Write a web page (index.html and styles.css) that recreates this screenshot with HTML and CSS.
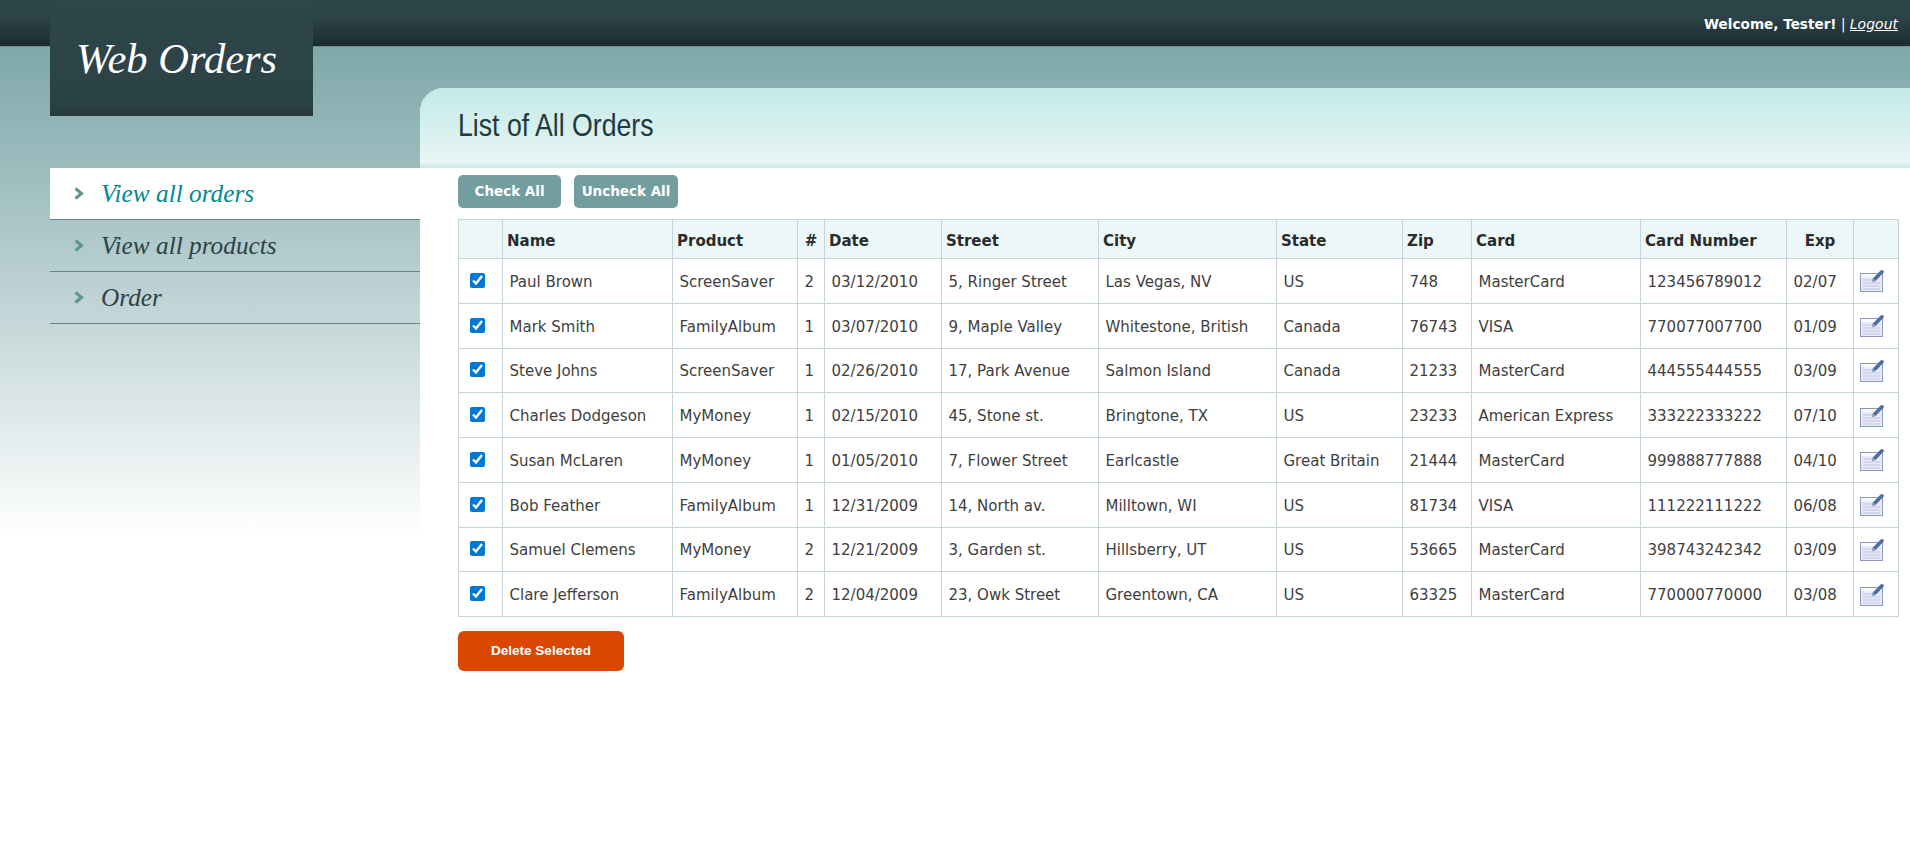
FILE: index.html
```html
<!DOCTYPE html>
<html lang="en">
<head>
    <meta charset="UTF-8">
    <title>Web Orders</title>
    <link rel="stylesheet" href="styles.css">
</head>
<body>
    <svg class="sprites" width="0" height="0">
        <symbol id="edit" viewBox="0 0 24 23">
            <rect x="0.5" y="4.5" width="22" height="18" fill="#e8ebf6" stroke="#8f98bf"/>
            <rect x="1" y="5" width="21" height="3" fill="#fafbfe"/>
            <path d="M3 11h12M3 14h17M3 17h17M3 20h17" stroke="#bcc4df" fill="none"/>
            <path d="M12 13l0.8-3.6L20.6 1.4c0.8-0.7 2-0.7 2.7 0c0.7 0.7 0.7 1.8 0 2.6L15.6 12z" fill="#4f6ca3"/>
            <path d="M12 13l0.8-3.6 2.8 2.6z" fill="#9aa6c9"/>
        </symbol>
        <symbol id="chevron" viewBox="0 0 10 13">
            <path d="M1.5 1.5L7.5 6.500L1.500 11.5" fill="none" stroke="#5f9293" stroke-width="3"/>
        </symbol>
    </svg>

    <div class="topbar">
        <div class="login-info"><b>Welcome, Tester!</b> | <a href="#">Logout</a></div>
    </div>

    <div class="layout">
        <div class="sidebar">
            <div class="logo">Web Orders</div>
            <ul class="menu">
                <li class="selected"><svg class="chevron"><use href="#chevron"/></svg><a href="#">View all orders</a></li>
                <li><svg class="chevron"><use href="#chevron"/></svg><a href="#">View all products</a></li>
                <li><svg class="chevron"><use href="#chevron"/></svg><a href="#">Order</a></li>
            </ul>
        </div>

        <div class="main">
            <h2 class="page-title"><span>List of All Orders</span></h2>
            <div class="content">
                <div class="list-actions">
                    <a href="#" class="btn btn-check">Check All</a>
                    <a href="#" class="btn btn-uncheck">Uncheck All</a>
                </div>

                <table class="orders">
                    <colgroup>
                        <col class="c-check"><col class="c-name"><col class="c-product"><col class="c-qty">
                        <col class="c-date"><col class="c-street"><col class="c-city"><col class="c-state">
                        <col class="c-zip"><col class="c-card"><col class="c-number"><col class="c-exp">
                        <col class="c-edit">
                    </colgroup>
                    <thead>
                        <tr>
                            <th></th>
                            <th>Name</th>
                            <th>Product</th>
                            <th class="center">#</th>
                            <th>Date</th>
                            <th>Street</th>
                            <th>City</th>
                            <th>State</th>
                            <th>Zip</th>
                            <th>Card</th>
                            <th>Card Number</th>
                            <th class="center">Exp</th>
                            <th></th>
                        </tr>
                    </thead>
                    <tbody>
                        <tr>
                            <td class="check"><input type="checkbox" checked></td>
                            <td>Paul Brown</td><td>ScreenSaver</td><td>2</td><td>03/12/2010</td>
                            <td>5, Ringer Street</td><td>Las Vegas, NV</td><td>US</td><td>748</td>
                            <td>MasterCard</td><td>123456789012</td><td>02/07</td>
                            <td class="edit"><svg class="edit-icon"><use href="#edit"/></svg></td>
                        </tr>
                        <tr>
                            <td class="check"><input type="checkbox" checked></td>
                            <td>Mark Smith</td><td>FamilyAlbum</td><td>1</td><td>03/07/2010</td>
                            <td>9, Maple Valley</td><td>Whitestone, British</td><td>Canada</td><td>76743</td>
                            <td>VISA</td><td>770077007700</td><td>01/09</td>
                            <td class="edit"><svg class="edit-icon"><use href="#edit"/></svg></td>
                        </tr>
                        <tr>
                            <td class="check"><input type="checkbox" checked></td>
                            <td>Steve Johns</td><td>ScreenSaver</td><td>1</td><td>02/26/2010</td>
                            <td>17, Park Avenue</td><td>Salmon Island</td><td>Canada</td><td>21233</td>
                            <td>MasterCard</td><td>444555444555</td><td>03/09</td>
                            <td class="edit"><svg class="edit-icon"><use href="#edit"/></svg></td>
                        </tr>
                        <tr>
                            <td class="check"><input type="checkbox" checked></td>
                            <td>Charles Dodgeson</td><td>MyMoney</td><td>1</td><td>02/15/2010</td>
                            <td>45, Stone st.</td><td>Bringtone, TX</td><td>US</td><td>23233</td>
                            <td>American Express</td><td>333222333222</td><td>07/10</td>
                            <td class="edit"><svg class="edit-icon"><use href="#edit"/></svg></td>
                        </tr>
                        <tr>
                            <td class="check"><input type="checkbox" checked></td>
                            <td>Susan McLaren</td><td>MyMoney</td><td>1</td><td>01/05/2010</td>
                            <td>7, Flower Street</td><td>Earlcastle</td><td>Great Britain</td><td>21444</td>
                            <td>MasterCard</td><td>999888777888</td><td>04/10</td>
                            <td class="edit"><svg class="edit-icon"><use href="#edit"/></svg></td>
                        </tr>
                        <tr>
                            <td class="check"><input type="checkbox" checked></td>
                            <td>Bob Feather</td><td>FamilyAlbum</td><td>1</td><td>12/31/2009</td>
                            <td>14, North av.</td><td>Milltown, WI</td><td>US</td><td>81734</td>
                            <td>VISA</td><td>111222111222</td><td>06/08</td>
                            <td class="edit"><svg class="edit-icon"><use href="#edit"/></svg></td>
                        </tr>
                        <tr>
                            <td class="check"><input type="checkbox" checked></td>
                            <td>Samuel Clemens</td><td>MyMoney</td><td>2</td><td>12/21/2009</td>
                            <td>3, Garden st.</td><td>Hillsberry, UT</td><td>US</td><td>53665</td>
                            <td>MasterCard</td><td>398743242342</td><td>03/09</td>
                            <td class="edit"><svg class="edit-icon"><use href="#edit"/></svg></td>
                        </tr>
                        <tr>
                            <td class="check"><input type="checkbox" checked></td>
                            <td>Clare Jefferson</td><td>FamilyAlbum</td><td>2</td><td>12/04/2009</td>
                            <td>23, Owk Street</td><td>Greentown, CA</td><td>US</td><td>63325</td>
                            <td>MasterCard</td><td>770000770000</td><td>03/08</td>
                            <td class="edit"><svg class="edit-icon"><use href="#edit"/></svg></td>
                        </tr>
                    </tbody>
                </table>

                <a href="#" class="btn-delete">Delete Selected</a>
            </div>
        </div>
    </div>
</body>
</html>
```

FILE: styles.css
```css
html, body {
    height: 100%;
}
body {
    margin: 0;
    font-family: "DejaVu Sans", Verdana, sans-serif;
    font-size: 15px;
    color: #404040;
    background-color: white;
    overflow: hidden;
}
a {
    color: inherit;
}
.sprites {
    display: block;
}

/* top bar */
.topbar {
    height: 46px;
    border-bottom: 1px solid #6f9293;
    background: linear-gradient(#2e454a, #2b4247 40%, #1b2c30);
    display: flex;
    justify-content: flex-end;
    align-items: center;
    padding-right: 12px;
    color: white;
}
.login-info {
    font-size: 13.600px;
    margin-top: 1px;
}
.login-info a {
    font-size: 14px;
    font-style: italic;
}

/* page */
.layout {
    display: flex;
    height: 820px;
    background: linear-gradient(#7fa8a9, #9cbcbe 120px, #c4d6d8 270px, #ffffff 490px);
}
.sidebar {
    width: 370px;
    margin-left: 50px;
    flex-shrink: 0;
}
.logo {
    margin-top: -47px;
    height: 116px;
    width: 263px;
    box-sizing: border-box;
    padding: 36px 0 0 26px;
    background: linear-gradient(#2e454a, #2b4247 85%, #263a3e);
    font-family: "Liberation Serif", Georgia, serif;
    font-style: italic;
    font-size: 42.500px;
    line-height: 46px;
    color: white;
}
.menu {
    list-style: none;
    margin: 52px 0 0;
    padding: 0;
}
.menu li {
    display: flex;
    align-items: center;
    height: 51px;
    border-bottom: 1px solid #668688;
    padding-left: 24px;
    font-family: "Liberation Serif", Georgia, serif;
    font-style: italic;
    font-size: 25.300px;
    color: #2b4247;
}
.menu li a {
    text-decoration: none;
}
.menu li.selected {
    background-color: white;
    color: #008b8f;
}
.chevron {
    width: 10px;
    height: 13px;
    margin-right: 17px;
}

/* main column */
.main {
    flex: 1;
    margin-top: 41px;
    background-color: white;
    border-top-left-radius: 24px;
}
.page-title {
    margin: 0;
    height: 80px;
    box-sizing: border-box;
    padding: 19px 0 0 38px;
    border-top-left-radius: 24px;
    background: linear-gradient(#c3eae7, #d6f0ee 50%, #e6f5f4 85%, #e9f6f5 92%, #c8e9e7);
    font-family: "Liberation Sans", Arial, sans-serif;
    font-weight: normal;
    font-size: 32px;
    line-height: 36px;
    color: #22393e;
}
/* the title font is a narrow one, no such family here */
.page-title span {
    display: inline-block;
    transform: scaleX(0.833);
    transform-origin: left center;
}
.content {
    padding: 7px 12px 0 38px;
}
.list-actions {
    display: flex;
    gap: 13px;
    margin-bottom: 11px;
}
.btn {
    display: block;
    height: 33px;
    line-height: 33px;
    border-radius: 5px;
    background-color: #739e9f;
    color: white;
    font-size: 13.500px;
    font-weight: bold;
    text-align: center;
    text-decoration: none;
}
.btn-check {
    width: 103px;
}
.btn-uncheck {
    width: 104px;
}

/* table */
.orders {
    width: 1440px;
    table-layout: fixed;
    border-collapse: collapse;
}
.c-check { width: 44px; }
.c-name { width: 170px; }
.c-product { width: 125px; }
.c-qty { width: 27px; }
.c-date { width: 117px; }
.c-street { width: 157px; }
.c-city { width: 178px; }
.c-state { width: 126px; }
.c-zip { width: 69px; }
.c-card { width: 169px; }
.c-number { width: 146px; }
.c-exp { width: 67px; }
.c-edit { width: 45px; }
th, td {
    box-sizing: border-box;
    border: 1px solid #c5d4d6;
    white-space: nowrap;
    overflow: hidden;
}
th {
    height: 39px;
    padding: 3px 4px 0;
    background-color: #ecf8f8;
    color: #2b2b2b;
    font-weight: bold;
    text-align: left;
}
th.center {
    text-align: center;
}
td {
    height: 44.750px;
    padding: 2px 6.500px 0;
}
td.check {
    padding: 0 0 1px 11px;
}
td.check input {
    display: block;
    width: 15px;
    height: 15px;
    margin: 0;
    accent-color: #0078d4;
}
td.edit {
    padding: 0 0 0 6px;
}
.edit-icon {
    display: block;
    width: 24px;
    height: 23px;
}

.btn-delete {
    display: block;
    width: 166px;
    height: 40px;
    margin-top: 14px;
    line-height: 40px;
    border-radius: 6px;
    background-color: #d94700;
    color: white;
    font-family: "Liberation Sans", Arial, sans-serif;
    font-size: 13.500px;
    font-weight: bold;
    text-align: center;
    text-decoration: none;
}
```
